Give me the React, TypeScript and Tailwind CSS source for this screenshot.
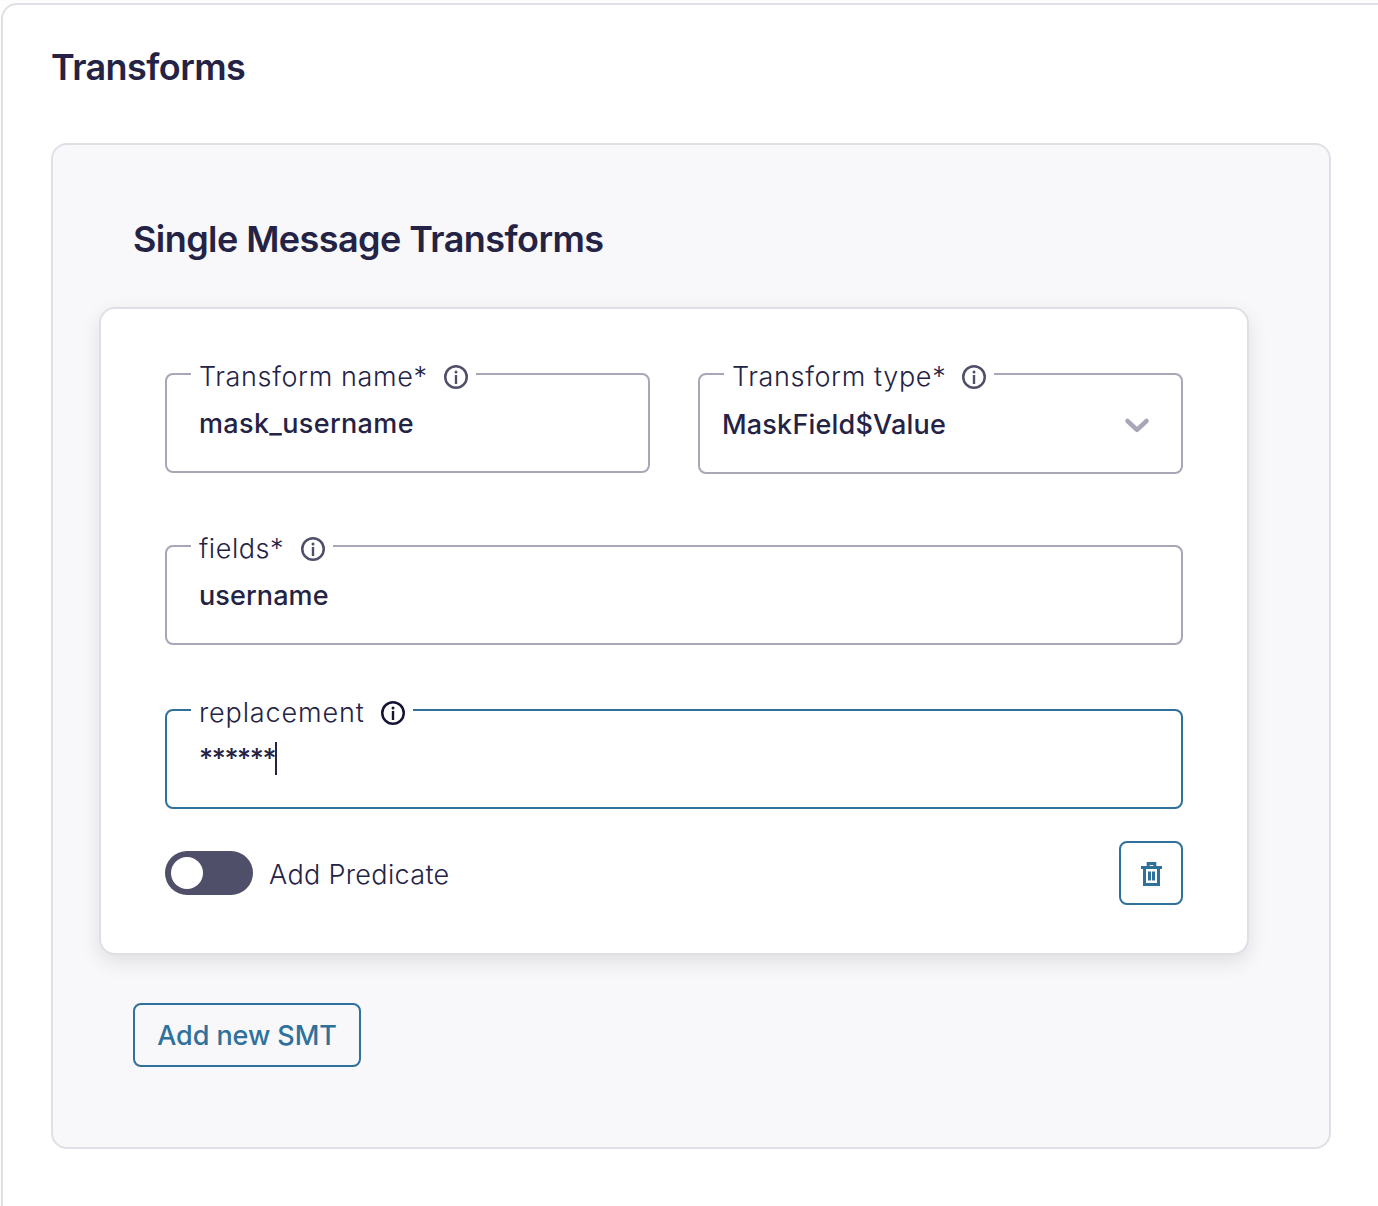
import type { ReactNode } from "react";

function InfoIcon({ color = "#504f69" }: { color?: string }) {
  return (
    <svg width="24" height="24" viewBox="0 0 24 24" fill="none" className="mt-px block shrink-0">
      <circle cx="12" cy="12" r="10.75" stroke={color} strokeWidth="2.5" />
      <circle cx="12" cy="7" r="1.5" fill={color} />
      <rect x="10.8" y="10" width="2.4" height="9" fill={color} />
    </svg>
  );
}

function Field({
  label,
  children,
  active = false,
  tall = false,
}: {
  label: ReactNode;
  children: ReactNode;
  active?: boolean;
  tall?: boolean;
}) {
  return (
    <div
      className={
        "relative rounded-lg border-2 bg-white text-[27px] leading-[33px] " +
        (active ? "border-[#2f719b] " : "border-[#a9a7b7] ") +
        (tall ? "h-[101px] pl-[22px] pt-[33px]" : "h-[100px] pl-8 pt-8")
      }
    >
      <label className="absolute -top-[15px] left-6 flex h-[33px] items-center bg-white px-2 font-light whitespace-nowrap">
        {label}
        <InfoIcon color={active ? "#151435" : "#504f69"} />
      </label>
      {children}
    </div>
  );
}

export default function App() {
  return (
    <div className="h-[1206px] overflow-hidden bg-[#fdfdfd] pt-[3px] pl-px font-['Inter',sans-serif] text-[#242345]">
      <main className="h-[1260px] w-[1400px] rounded-2xl border-2 border-[#e0dfe6] bg-white pl-12">
        <h1 className="pt-10 text-[36px] leading-[44px] font-semibold">
          <span className="tracking-[-0.58px]">Transforms</span>
        </h1>
        <section className="mt-[54px] h-[1006px] w-[1280px] rounded-2xl border-2 border-[#e0dfe6] bg-[#f8f8fa] pl-[46px]">
          <h2 className="pt-[72px] pl-[34px] text-[36px] leading-[44px] font-semibold">
            <span className="tracking-[-0.57px]">Single Message Transforms</span>
          </h2>
          <div className="mt-[46px] h-[648px] w-[1150px] rounded-2xl border-2 border-[#e0dfe6] bg-white px-16 pt-16 shadow-[0_7px_20px_rgba(0,0,0,0.1)]">
            <div className="grid h-[172px] grid-cols-2 items-start gap-12">
              <Field label={<span className="w-[245px] tracking-[0.63px]">Transform name*</span>}>
                <span className="block font-medium tracking-[0.35px]">mask_username</span>
              </Field>
              <Field tall label={<span className="w-[230px] tracking-[0.63px]">Transform type*</span>}>
                <div className="flex items-center justify-between pr-[31px]">
                  <span className="font-medium tracking-[0.2px]">MaskField$Value</span>
                  <svg width="26" height="18" viewBox="0 0 26 18" fill="none">
                    <path d="M3.5 5 13 13.8 22.5 5" stroke="#a9a7b7" strokeWidth="4.5" strokeLinecap="round" strokeLinejoin="round" />
                  </svg>
                </div>
              </Field>
            </div>
            <div className="flex flex-col gap-16">
              <Field label={<span className="w-[102px] tracking-[0.55px]">fields*</span>}>
                <span className="block font-medium tracking-[0.1px]">username</span>
              </Field>
              <Field active label={<span className="w-[182px] tracking-[0.85px]">replacement</span>}>
                <div className="-mt-px flex h-[33px] items-center">
                  <span className="w-[76px] font-medium tracking-[-1.35px]">******</span>
                  <span className="h-[33px] w-0.5 bg-[#242345]" />
                </div>
              </Field>
            </div>
            <div className="mt-8 flex h-16 items-center">
              <div className="flex h-11 w-[88px] items-center rounded-full bg-[#504f69] px-1.5">
                <div className="h-8 w-8 rounded-full bg-white" />
              </div>
              <span className="ml-4 pt-[3px] text-[27px] leading-[33px] font-light tracking-[0.33px]">
                Add Predicate
              </span>
              <button className="ml-auto flex h-16 w-16 items-center justify-center rounded-lg border-2 border-[#2f719b] pt-0.5 pl-px">
                <svg width="21" height="24" viewBox="0 0 21 24" fill="none" stroke="#2f719b" className="block">
                  <path d="M7.2 5V1.5h6.6V5" strokeWidth="3" />
                  <path d="M0 5.5h21" strokeWidth="3" />
                  <path d="M3.5 6v16.5h14V6" strokeWidth="3" />
                  <path d="M8.5 9.5v9M12.5 9.5v9" strokeWidth="3" />
                </svg>
              </button>
            </div>
          </div>
          <button className="mt-12 ml-[34px] flex h-16 w-[228px] items-center justify-center rounded-lg border-2 border-[#2f719b] pt-px text-[27px] leading-[33px] font-medium text-[#2f719b]">
            <span className="tracking-[-0.08px]">Add new SMT</span>
          </button>
        </section>
      </main>
    </div>
  );
}
